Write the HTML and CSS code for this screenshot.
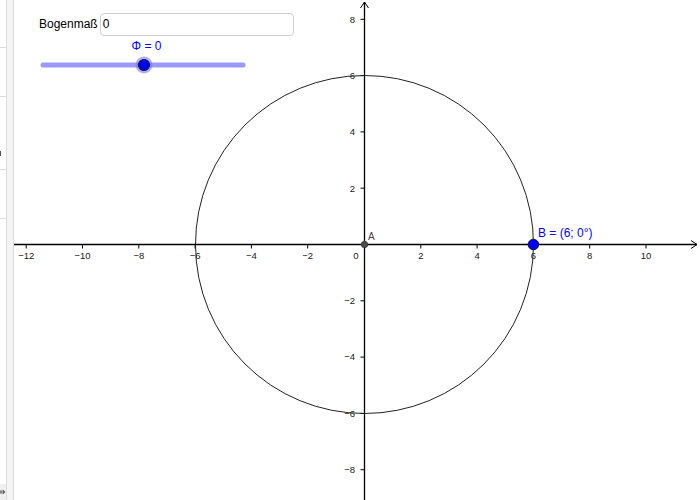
FILE: index.html
```html
<!DOCTYPE html>
<html>
<head>
<meta charset="utf-8">
<link rel="stylesheet" href="styles.css">
</head>
<body>
<div class="app">
  <div class="sidebar">
    <div class="sec s1"></div>
    <div class="sec s2"></div>
    <div class="sec s3"><span class="mark"></span></div>
    <div class="sec s4"></div>
    <div class="rest"></div>
    <div class="foot">
      <svg width="6" height="16" viewBox="0 0 6 16" xmlns="http://www.w3.org/2000/svg">
        <path d="M0 8 H2 M1 6 V10 M3 6 L5 8 L3 10 Z" stroke="#666" stroke-width="1" fill="#666"/>
      </svg>
    </div>
  </div>
  <div class="strip"></div>
  <div class="canvas">
    <svg class="plot" width="686" height="500" viewBox="14 0 686 500" xmlns="http://www.w3.org/2000/svg">
      <g class="axes" stroke="#000" stroke-width="1.3" fill="none">
        <line x1="14" y1="244.5" x2="697" y2="244.5"/>
        <polyline points="691,240.5 697,244.5 691,248.5" stroke-width="1"/>
        <line x1="364.5" y1="2" x2="364.5" y2="500"/>
        <polyline points="360.5,8 364.5,2 368.5,8" stroke-width="1"/>
      </g>
      <g stroke="#000" stroke-width="1">
        <line x1="26.2" y1="244.5" x2="26.2" y2="248.5"/>
        <line x1="82.5" y1="244.5" x2="82.5" y2="248.5"/>
        <line x1="138.8" y1="244.5" x2="138.8" y2="248.5"/>
        <line x1="195.1" y1="244.5" x2="195.1" y2="248.5"/>
        <line x1="251.4" y1="244.5" x2="251.4" y2="248.5"/>
        <line x1="307.7" y1="244.5" x2="307.7" y2="248.5"/>
        <line x1="420.8" y1="244.5" x2="420.8" y2="248.5"/>
        <line x1="477.1" y1="244.5" x2="477.1" y2="248.5"/>
        <line x1="533.4" y1="244.5" x2="533.4" y2="248.5"/>
        <line x1="589.7" y1="244.5" x2="589.7" y2="248.5"/>
        <line x1="646" y1="244.5" x2="646" y2="248.5"/>
        <line x1="360.5" y1="19.3" x2="364.5" y2="19.3"/>
        <line x1="360.5" y1="75.6" x2="364.5" y2="75.6"/>
        <line x1="360.5" y1="131.9" x2="364.5" y2="131.9"/>
        <line x1="360.5" y1="188.2" x2="364.5" y2="188.2"/>
        <line x1="360.5" y1="300.8" x2="364.5" y2="300.8"/>
        <line x1="360.5" y1="357.1" x2="364.5" y2="357.1"/>
        <line x1="360.5" y1="413.4" x2="364.5" y2="413.4"/>
        <line x1="360.5" y1="469.7" x2="364.5" y2="469.7"/>
      </g>
      <g class="ticklbl" text-anchor="middle">
        <text x="26.2" y="259">−12</text>
        <text x="82.5" y="259">−10</text>
        <text x="138.8" y="259">−8</text>
        <text x="195.1" y="259">−6</text>
        <text x="251.4" y="259">−4</text>
        <text x="307.7" y="259">−2</text>
        <text x="356" y="259">0</text>
        <text x="420.8" y="259">2</text>
        <text x="477.1" y="259">4</text>
        <text x="533.4" y="259">6</text>
        <text x="589.7" y="259">8</text>
        <text x="646" y="259">10</text>
      </g>
      <g class="ticklbl" text-anchor="end">
        <text x="355" y="22.6">8</text>
        <text x="355" y="78.9">6</text>
        <text x="355" y="135.2">4</text>
        <text x="355" y="191.5">2</text>
        <text x="355" y="304.1">−2</text>
        <text x="355" y="360.4">−4</text>
        <text x="355" y="416.7">−6</text>
        <text x="355" y="473">−8</text>
      </g>
      <circle cx="364.5" cy="244.5" r="169" fill="none" stroke="#222" stroke-width="1"/>
      <circle cx="364.5" cy="244.5" r="3.2" fill="#4d4d4d" stroke="#333" stroke-width="0.8"/>
      <text class="ptA" x="368" y="239.5">A</text>
      <circle cx="533.4" cy="244.5" r="5.3" fill="#0000ff" stroke="#1a1a1a" stroke-width="1"/>
      <text class="ptB" x="538" y="237">B = (6; 0°)</text>
      <text class="ptB" x="146.5" y="50" text-anchor="middle">Φ = 0</text>
      <line x1="43" y1="65" x2="243" y2="65" stroke="#9999ff" stroke-width="5" stroke-linecap="round"/>
      <circle cx="144" cy="65" r="8.5" fill="#7777ff" fill-opacity="0.6"/>
      <circle cx="144" cy="65" r="5.5" fill="#0000ff" stroke="#1a1a1a" stroke-width="1.2"/>
    </svg>
    <div class="inputbox">
      <span class="lbl">Bogenmaß</span>
      <span class="field">0</span>
    </div>
  </div>
</div>
</body>
</html>
```
FILE: styles.css
```css
html, body {
  margin: 0;
  padding: 0;
  background: #fff;
  font-family: "Liberation Sans", Arial, sans-serif;
}
.app {
  display: flex;
  width: 700px;
  height: 500px;
  overflow: hidden;
}
.sidebar {
  width: 6px;
  border-right: 1px solid #dcdcdc;
  display: flex;
  flex-direction: column;
  background: #fff;
}
.sec {
  border-bottom: 1px solid #dcdcdc;
  position: relative;
}
.s1 { height: 47px; }
.s2 { height: 48px; }
.s3 { height: 72px; }
.s4 { height: 48px; }
.rest { flex: 1; }
.mark {
  position: absolute;
  left: 0;
  top: 54px;
  width: 1px;
  height: 5px;
  background: #555;
}
.foot {
  height: 16px;
  background: #efefef;
}
.foot svg {
  display: block;
}
.strip {
  width: 6px;
  background: #f5f5f5;
  border-right: 1px solid #dcdcdc;
}
.canvas {
  flex: 1;
  position: relative;
}
.plot {
  display: block;
}
.ticklbl text {
  font-family: "Liberation Sans", Arial, sans-serif;
  font-size: 9.5px;
  fill: #1a1a1a;
}
.ptA {
  font-family: "Liberation Sans", Arial, sans-serif;
  font-size: 10px;
  fill: #444;
}
.ptB {
  font-family: "Liberation Sans", Arial, sans-serif;
  font-size: 12px;
  fill: #0000ff;
}
.inputbox {
  position: absolute;
  left: 25px;
  top: 13px;
  display: flex;
  align-items: center;
  gap: 2px;
  font-size: 12px;
  color: #000;
}
.lbl {
  line-height: 23px;
}
.field {
  box-sizing: border-box;
  width: 194px;
  height: 23px;
  border: 1px solid #cfcfcf;
  border-radius: 4px;
  padding: 0 2px;
  line-height: 21px;
  background: #fff;
}
```
